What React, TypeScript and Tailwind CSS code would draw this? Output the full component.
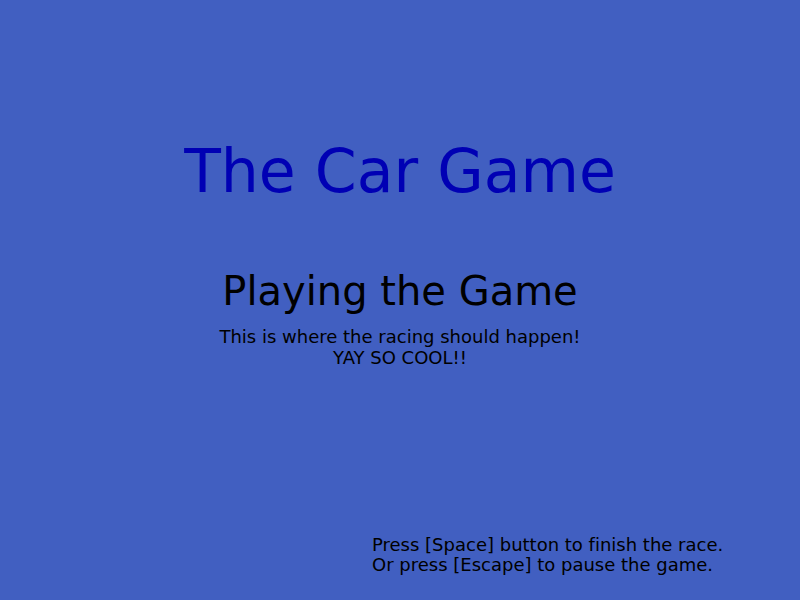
import React from 'react';

export default function App() {
  return (
    <div
      className="w-[800px] h-[600px] bg-[#415fc1] flex flex-col overflow-hidden [font-variant-ligatures:none]"
      style={{ fontFamily: '"DejaVu Sans", sans-serif' }}
    >
      <div className="pt-[136px] text-center">
        <h1 className="text-[60px] leading-[70px] text-[#0000b4]">The Car Game</h1>
      </div>
      <div className="mt-[62px] text-center text-black">
        <h2 className="text-[40px] leading-[47px]">Playing the Game</h2>
        <p className="mt-[11px] text-[18px] leading-[21px]">This is where the racing should happen!</p>
        <p className="text-[18px] leading-[21px]">YAY SO COOL!!</p>
      </div>
      <div className="mt-auto pb-[25px] pl-[372px] text-black text-[18px] leading-[20px]">
        <p>Press [Space] button to finish the race.</p>
        <p>Or press [Escape] to pause the game.</p>
      </div>
    </div>
  );
}
